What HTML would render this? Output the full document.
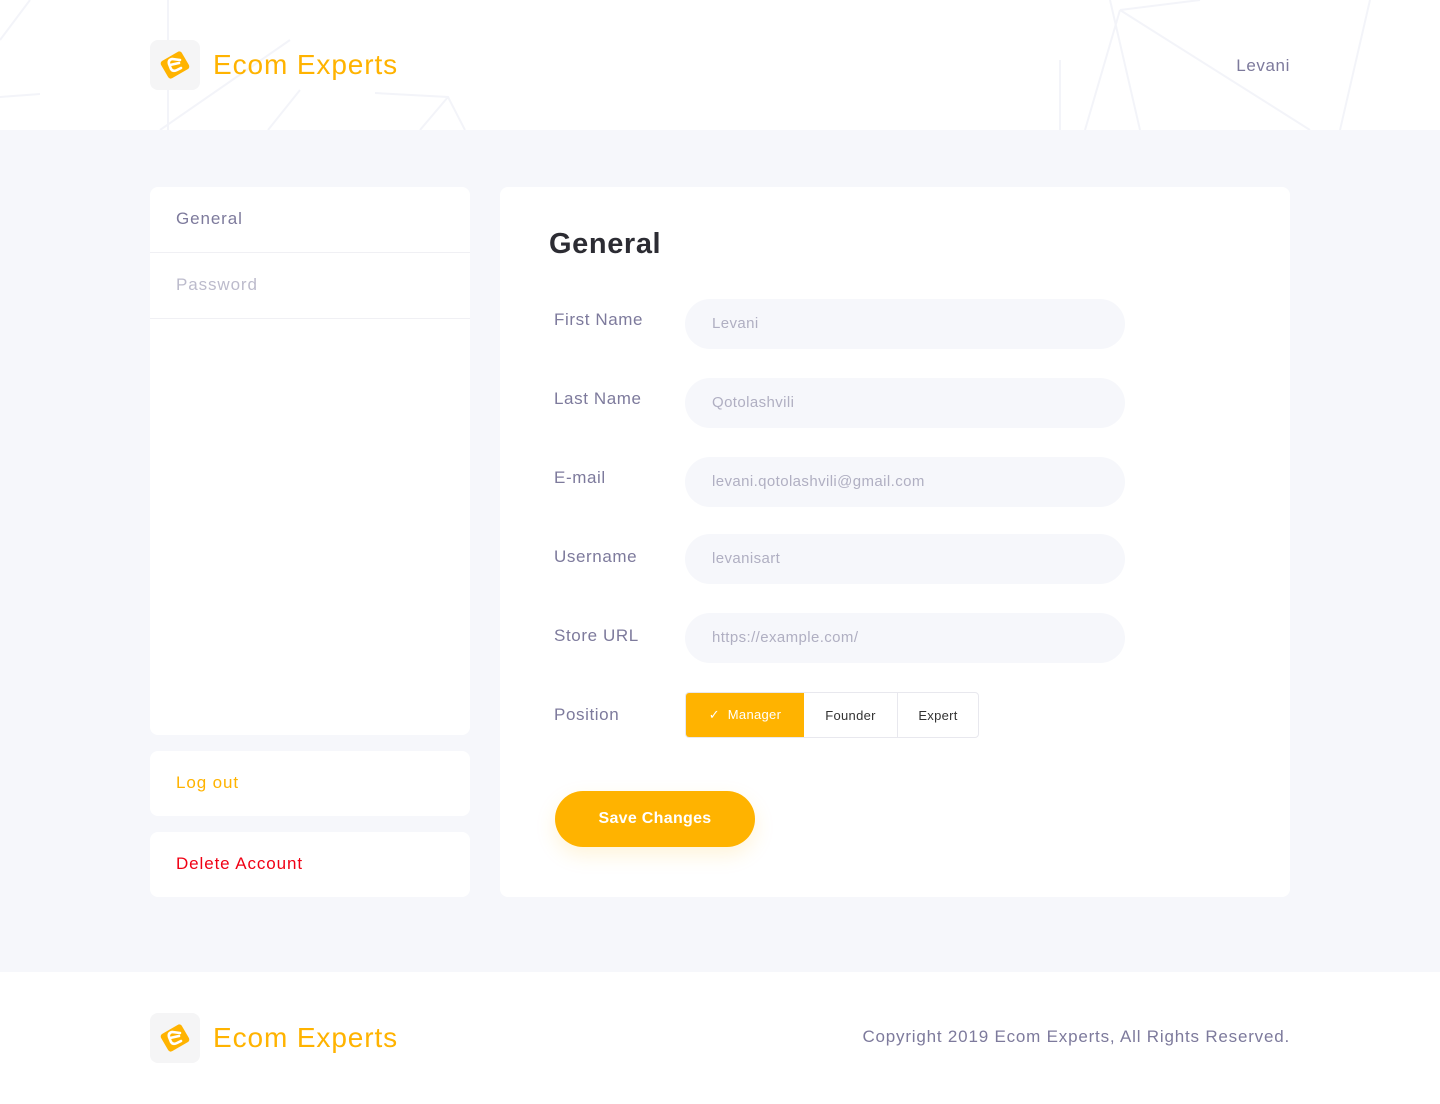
<!DOCTYPE html>
<html><head><meta charset="utf-8"><style>
*{box-sizing:border-box;margin:0;padding:0}
body{width:1440px;height:1104px;font-family:"Liberation Sans",sans-serif;background:#fff;position:relative;overflow:hidden}
.header{height:130px;background:#fff;position:relative}
.logo{position:absolute;display:flex;align-items:center}
.logo .ic{width:50px;height:50px;border-radius:8px;background:#f5f5f6;display:flex;align-items:center;justify-content:center}
.logo span{color:#ffb300;font-size:28px;margin-left:13px;letter-spacing:.9px}
.main{position:absolute;top:130px;left:0;width:1440px;height:842px;background:#f6f7fb}
.card{position:absolute;background:#fff;border-radius:8px}
.side a{display:block;height:66px;line-height:64px;padding-left:26px;font-size:17px;border-bottom:1px solid #f0f0f4;letter-spacing:.9px}
.lbl{position:absolute;left:554px;font-size:17px;color:#7d7a9c;letter-spacing:.6px}
.inp{position:absolute;left:685px;width:440px;height:50px;border-radius:25px;background:#f6f7fb;color:#b0afc2;font-size:15px;line-height:50px;padding-left:27px;letter-spacing:.4px}
.seg{position:absolute;left:685px;top:692px;height:46px;display:flex;border:1px solid #e8e8ee;border-radius:4px;overflow:hidden;font-size:13px;color:#333;letter-spacing:.3px}
.seg div{display:flex;align-items:center;justify-content:center;border-right:1px solid #e8e8ee}
.footer{position:absolute;top:972px;left:0;width:1440px;height:132px;background:#fff}
</style></head><body>
<div class="header">
<svg width="1440" height="130" style="position:absolute;left:0;top:0" stroke="#f3f4f9" stroke-width="2" fill="none">
<path d="M0 40 L30 0 M0 97 L40 94 M168 0 L168 130 M160 130 L290 40 M268 130 L300 90 M375 93 L448 97 L465 130 M448 97 L420 130 M1110 0 L1140 130 M1120 10 L1085 130 M1120 10 L1310 130 M1120 10 L1200 0 M1370 0 L1340 130 M1060 60 L1060 130"/>
</svg>
<div class="logo" style="left:150px;top:40px"><div class="ic"><svg width="34" height="34" viewBox="0 0 34 34"><rect x="5" y="7" width="24" height="20" rx="3" fill="#ffb300" transform="rotate(-30 17 17)"/><path d="M22 12 L14 11 Q10 12 11 16 L13 21 Q15 24 19 22 L23 20 M12 17 L21 15" stroke="#fff" stroke-width="2.6" fill="none" stroke-linecap="round"/></svg></div><span>Ecom Experts</span></div>
<div style="position:absolute;right:150px;top:56px;color:#7d7a9c;font-size:17px;letter-spacing:.6px">Levani</div>
</div>
<div class="main"></div>
<div class="card side" style="left:150px;top:187px;width:320px;height:548px">
<a style="color:#7d7a9c">General</a>
<a style="color:#bcbbcc">Password</a>
</div>
<div class="card side" style="left:150px;top:751px;width:320px;height:65px"><a style="color:#ffb300;border:none">Log out</a></div>
<div class="card side" style="left:150px;top:832px;width:320px;height:65px"><a style="color:#f00014;border:none">Delete Account</a></div>
<div class="card" style="left:500px;top:187px;width:790px;height:710px"></div>
<div style="position:absolute;left:549px;top:228px;font-size:29px;font-weight:bold;color:#2c2c33;letter-spacing:.6px">General</div>
<div class="lbl" style="top:310px">First Name</div><div class="inp" style="top:299px">Levani</div>
<div class="lbl" style="top:389px">Last Name</div><div class="inp" style="top:378px">Qotolashvili</div>
<div class="lbl" style="top:468px">E-mail</div><div class="inp" style="top:457px">levani.qotolashvili@gmail.com</div>
<div class="lbl" style="top:547px">Username</div><div class="inp" style="top:534px">levanisart</div>
<div class="lbl" style="top:626px">Store URL</div><div class="inp" style="top:613px">https://example.com/</div>
<div class="lbl" style="top:705px">Position</div>
<div class="seg">
<div style="width:118px;background:#ffb300;color:#fff;border:none">✓&nbsp;&nbsp;Manager</div>
<div style="width:94px">Founder</div>
<div style="width:80px;border:none">Expert</div>
</div>
<div style="position:absolute;left:555px;top:791px;width:200px;height:56px;border-radius:28px;background:#ffb300;color:#fff;font-weight:bold;font-size:16px;text-align:center;line-height:56px;box-shadow:0 8px 20px rgba(255,179,0,.15);letter-spacing:.3px">Save Changes</div>
<div class="footer">
<div class="logo" style="left:150px;top:41px"><div class="ic"><svg width="34" height="34" viewBox="0 0 34 34"><rect x="5" y="7" width="24" height="20" rx="3" fill="#ffb300" transform="rotate(-30 17 17)"/><path d="M22 12 L14 11 Q10 12 11 16 L13 21 Q15 24 19 22 L23 20 M12 17 L21 15" stroke="#fff" stroke-width="2.6" fill="none" stroke-linecap="round"/></svg></div><span>Ecom Experts</span></div>
<div style="position:absolute;right:150px;top:55px;color:#7d7a9c;font-size:17px;letter-spacing:.8px">Copyright 2019 Ecom Experts, All Rights Reserved.</div>
</div>
</body></html>
